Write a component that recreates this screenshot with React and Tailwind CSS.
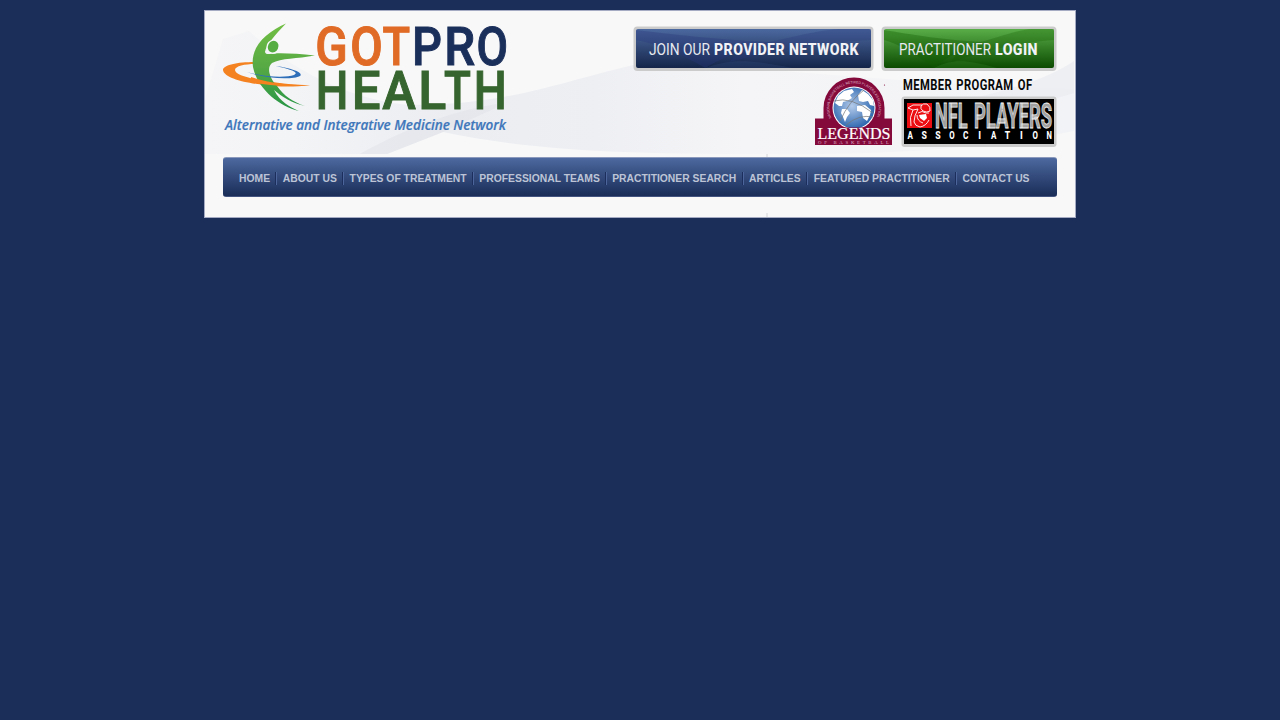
import React from "react";

const NAV = [
  ["HOME", "w-[31px]"],
  ["ABOUT US", "w-[54px]"],
  ["TYPES OF TREATMENT", "w-[117px]"],
  ["PROFESSIONAL TEAMS", "w-[120px]"],
  ["PRACTITIONER SEARCH", "w-[124px]"],
  ["ARTICLES", "w-[52px]"],
  ["FEATURED PRACTITIONER", "w-[136px]"],
  ["CONTACT US", "w-[67px]"],
];

// [letter, x, advance, colour]
const TOP_LETTERS = [
  ["G", 92.2, 32.5, "#e06b26"],
  ["O", 127.2, 32.5, "#e06b26"],
  ["T", 159.5, 27.6, "#e06b26"],
  ["P", 189, 30, "#1b2f5b"],
  ["R", 221.3, 31, "#1b2f5b"],
  ["O", 253.5, 31.5, "#1b2f5b"],
];
const BOTTOM_LETTERS = [
  ["H", 92.7, 32.6, "#37652f"],
  ["E", 128.7, 28.8, "#37652f"],
  ["A", 159.2, 33.6, "#37652f"],
  ["L", 195.2, 28, "#37652f"],
  ["T", 220.9, 26.9, "#37652f"],
  ["H", 250.8, 33, "#37652f"],
];

function T({ x, y, w, size, fill, children, weight = 400, family = "Roboto, sans-serif", italic, ...rest }) {
  return (
    <text x={x} y={y} textLength={w} lengthAdjust="spacingAndGlyphs" fontSize={size} fontWeight={weight}
      fontFamily={family} fontStyle={italic ? "italic" : "normal"} fill={fill} {...rest}>
      {children}
    </text>
  );
}

function Logo() {
  return (
    <svg width="286" height="116" viewBox="0 0 286 116" className="shrink-0 overflow-visible">
      <defs>
        <linearGradient id="fig" x1="0" y1="0" x2="0" y2="1">
          <stop offset="0" stopColor="#72bf44" />
          <stop offset=".5" stopColor="#56a944" />
          <stop offset="1" stopColor="#249546" />
        </linearGradient>
      </defs>
      <path d="M32 39 C14 39 0 42 0 47 C1 55 22 60 42 62 C56 64 72 64 87 62 C65 62 12 56 12 47 C12 43 22 41 32 41Z" fill="#f58220" />
      <path d="M63 .5 C52 12 43 22 42 29 C43 32 46 31 52 30.5 C62 30 76 31 92 32.5 C74 36 58 35 49 40 C43 45 47 56 54 63 C61 73 70 79 82 83 C69 80 59 74 51 67 C57 79 67 84 76 88 C55 83 34 65 30 44 C27 23 44 9 63 .5Z" fill="url(#fig)" />
      <ellipse cx="50" cy="24" rx="6.6" ry="7" fill="#f8f8f8" />
      <ellipse cx="50" cy="23.6" rx="5.2" ry="6" transform="rotate(25 50 24)" fill="#56ae43" />
      <path d="M24 49 C40 54 63 55 71 52 C77 49 66 46 53 43 C69 45 81 50 77 53 C70 57 42 56 24 49Z" fill="#2f6fba" />
      <path d="M28 54 C46 60 62 62 87 62 C65 64 44 63 27 59Z" fill="#f58220" />
      {TOP_LETTERS.map(([c, x, w, f], i) => (
        <T key={i} x={x} y="41.8" w={w} size="54" weight="500" fill={f} stroke={f} strokeWidth="1">{c}</T>
      ))}
      {BOTTOM_LETTERS.map(([c, x, w, f], i) => (
        <T key={i} x={x} y="86" w={w} size="54" weight="500" fill={f} stroke={f} strokeWidth="1">{c}</T>
      ))}
      <T x="2" y="107.4" w="281" size="13.6" weight="600" italic family="'Open Sans', sans-serif" fill="#3f77bb" stroke="#3f77bb" strokeWidth=".2">
        Alternative and Integrative Medicine Network
      </T>
    </svg>
  );
}

function ButtonArt({ w, colors, light, bold, lx, lw, bx, bw, spacing, id }) {
  return (
    <svg width={w} height="46" viewBox={`0 0 ${w} 46`} className="block">
      <defs>
        <linearGradient id={id} x1="0" y1="0" x2="0" y2="1">
          <stop offset="0" stopColor={colors[0]} />
          <stop offset="1" stopColor={colors[1]} />
        </linearGradient>
      </defs>
      <rect x=".5" y=".5" width={w - 1} height="44.5" rx="4" fill="#cbcbcb" />
      <rect x="3" y="3" width={w - 6} height="39" rx="2" fill={`url(#${id})`} />
      <path d={`M3 4 C${w * 0.15} 8 ${w * 0.4} 15 ${w * 0.58} 16 C${w * 0.44} 24 ${w * 0.36} 33 ${w * 0.3} 42 C${w * 0.2} 28 ${w * 0.1} 18 3 14Z`} fill={colors[2]} opacity=".35" />
      <path d={`M${w * 0.52} 18 C${w * 0.66} 12 ${w * 0.76} 4 ${w * 0.86} 3 H${w - 3} V14 C${w * 0.8} 16 ${w * 0.6} 24 ${w * 0.4} 36 C${w * 0.42} 28 ${w * 0.48} 21 ${w * 0.52} 18Z`} fill={colors[2]} opacity=".28" />
      <path d={`M${w * 0.3} 42 C${w * 0.4} 33 ${w * 0.48} 33 ${w * 0.66} 42Z`} fill={colors[0]} opacity=".16" />
      <T x={lx} y="29" w={lw} size="17" fill="#e6e9ef">{light}</T>
      <T x={bx} y="29" w={bw} size="17" weight="800" letterSpacing={spacing} fill="#f2f3f7">{bold}</T>
    </svg>
  );
}

function Legends() {
  return (
    <svg width="78" height="69" viewBox="0 0 78 69" className="shrink-0">
      <defs>
        <radialGradient id="globe" cx=".45" cy=".45" r=".6">
          <stop offset="0" stopColor="#b4cbea" />
          <stop offset="1" stopColor="#2360ab" />
        </radialGradient>
        <path id="arc" d="M16.5 41 A24.6 24.6 0 1 1 61.5 41" />
      </defs>
      <path d="M0 41.5 H8.5 V31 A30.5 30.5 0 0 1 69.5 31 V41.5 H77 V68 H0Z" fill="#850a3c" />
      <text fontSize="3.6" fontFamily="'Liberation Sans', sans-serif" fill="#ddb3c4">
        <textPath href="#arc" textLength="96" lengthAdjust="spacingAndGlyphs">NATIONAL BASKETBALL RETIRED PLAYERS ASSOCIATION</textPath>
      </text>
      <circle cx="39" cy="31" r="21.5" fill="#fff" />
      <circle cx="39" cy="31" r="20.5" fill="url(#globe)" />
      <path d="M20 26 L23 19 L29 14 L37 12 L39 15 L35 18 L37 21 L32 24 L28 25 L27 29 L24 29Z M27 32 L32 32 L35 36 L32 40 L30 45 L28 40 L26 36Z M43 18 L47 13 L53 17 L58 23 L59 29 L55 28 L53 24 L48 25 L44 24Z M42 29 L50 28 L56 33 L55 38 L52 44 L48 41 L47 35 L42 34Z" fill="#fff" />
      <path d="M19 24 Q36 19 58 36 M25 44 Q34 24 49 13 M31 48 Q44 37 58 40" fill="none" stroke="#777" strokeWidth=".9" opacity=".8" />
      <rect x="0" y="50.5" width="77" height="17.5" fill="#850a3c" />
      <circle cx="69.5" cy="8" r=".6" fill="#850a3c" />
      <T x="2.5" y="62" w="73" size="15.8" family="'Liberation Serif', serif" fill="#fff" stroke="#fff" strokeWidth=".2">LEGENDS</T>
      <T x="3" y="67.3" w="71" size="4.8" family="'Liberation Serif', serif" fill="#deb2c5" lengthAdjust="spacing">OF BASKETBALL</T>
    </svg>
  );
}

function Players() {
  return (
    <svg width="156" height="52" viewBox="0 0 156 52" className="block">
      <rect x=".5" y=".5" width="155" height="50.5" rx="3" fill="#cbcbcb" />
      <rect x="3" y="3" width="150" height="45" fill="#000" />
      <rect x="6" y="7" width="25" height="25" fill="#ec0d12" />
      <path d="M7 12 L12 9 L21 9 M7 12 L12 14 L17 13 M12 14 Q8 21 10 30 M17 13 Q13 20 13 26 Q14 30 19 31 Q25 30 28 24 M20 10 Q22 7 26 8 Q30 11 29 15 Q26 17 22 15 Q19 13 20 10 M17 17 Q21 14 25 17 L28 17 M16 19 Q16 25 22 27" fill="none" stroke="#fff" strokeWidth=".9" />
      <path d="M18 19 L25 18 L26 22 L23 25 L19 22Z" fill="#fff" />
      <T x="34" y="31.5" w="32.5" size="34.5" weight="700" fill="#a0a0a0" stroke="#f4f4f4" strokeWidth=".8">NFL</T>
      <T x="73" y="31.5" w="78" size="34.5" weight="700" fill="#a0a0a0" stroke="#f4f4f4" strokeWidth=".8">PLAYERS</T>
      {"ASSOCIATION".split("").map((c, i) => {
        const w = c === "I" ? 2.8 : 5.4;
        return (
          <T key={i} x={9.2 + i * 13.9 - w / 2} y="42.8" w={w} size="10.3" weight="800" fill="#fff">{c}</T>
        );
      })}
    </svg>
  );
}

export default function App() {
  return (
    <div className="flex min-h-screen items-start justify-center bg-[#1b2e59] pt-[10px]">
      <header className="relative h-[208px] w-[872px] border border-[#a5abc2] bg-[#f8f8f8]">
        <svg width="870" height="206" viewBox="0 0 870 206" className="absolute left-0 top-0">
          <defs>
            <linearGradient id="wave" x1="0" x2="1">
              <stop offset="0" stopColor="#f5f5f7" />
              <stop offset=".1" stopColor="#f3f4f6" />
              <stop offset=".28" stopColor="#ebedf1" />
              <stop offset=".45" stopColor="#eeeff3" />
              <stop offset=".62" stopColor="#f5f5f7" />
              <stop offset="1" stopColor="#f2f3f6" />
            </linearGradient>
          </defs>
          <path d="M0 88 L18 28 L44 20 C90 62 150 90 205 94 C300 94 345 74 428 54 C520 50 640 70 869 78 V120 C760 142 640 144 560 143 C400 143 320 138 238 121 L182 143 H0Z" fill="url(#wave)" />
          <path d="M155 143 C200 118 250 98 300 92 C290 98 265 108 238 121 L182 143Z" fill="#dfe2ea" opacity=".5" />
          <path d="M735 94 C790 84 840 70 869 50 V82 C840 92 790 98 735 106Z" fill="#e9ebf1" opacity=".7" />
          <path d="M561 143 h2 v3 h-2Z M561 202 h2 v4 h-2Z" fill="#e6e6e9" />
        </svg>
        <div className="relative flex h-[146px] justify-between pl-[18px] pr-[18px] pt-[12px]">
          <Logo />
          <div className="flex flex-col items-end pt-[3px]">
            <div className="flex gap-[7px]">
              <a className="block"><ButtonArt id="join" w={241} colors={["#4b689f", "#142549", "#28377b"]} light="JOIN OUR" bold="PROVIDER NETWORK" lx={16} lw={61} bx={81} bw={145} spacing=".5" /></a>
              <a className="block"><ButtonArt id="login" w={176} colors={["#59ad48", "#0b4b00", "#125b00"]} light="PRACTITIONER" bold="LOGIN" lx={18} lw={92} bx={114} bw={43} spacing=".5" /></a>
            </div>
            <div className="flex gap-[8px] pt-[5px]">
              <Legends />
              <div>
                <svg width="156" height="19" viewBox="0 0 156 19" className="block">
                  <T x="2" y="13" w="129.5" size="14" weight="700" letterSpacing=".5" wordSpacing="1.5" fill="#080808">MEMBER PROGRAM OF</T>
                </svg>
                <Players />
              </div>
            </div>
          </div>
        </div>
        <nav className="relative mx-[18px] flex h-[40px] items-center rounded-[3px] border-y border-t-[#8b9abc] border-b-[#42547f] bg-linear-to-b from-[#4d699f] to-[#1a2d58] pl-[16px] pt-[2px] font-['Liberation_Sans',sans-serif] text-[10.35px] font-bold text-[#bcc4d6]">
          {NAV.map(([label, width], i) => (
            <React.Fragment key={label}>
              {i > 0 && <span className="mx-[5.4px] h-[13px] w-[2px] shrink-0 border-l border-r border-l-[#1b2e5c] border-r-[#4c659a]" />}
              <a className={`${width} shrink-0 whitespace-nowrap pt-[2px]`}>{label}</a>
            </React.Fragment>
          ))}
        </nav>
      </header>
    </div>
  );
}
